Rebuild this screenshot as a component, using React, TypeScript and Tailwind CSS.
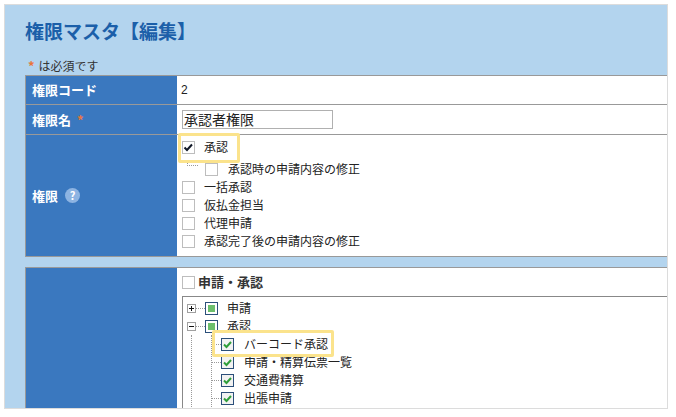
import React from "react";

type Item = { label: string; checked?: boolean };

const perms: Item[] = [
  { label: "一括承認" },
  { label: "仮払金担当" },
  { label: "代理申請" },
  { label: "承認完了後の申請内容の修正" },
];

const approvalChildren = ["バーコード承認", "申請・精算伝票一覧", "交通費精算", "出張申請"];

function PlainBox({ checked }: { checked?: boolean }) {
  return (
    <div className="relative w-[13px] h-[13px] shrink-0 border border-[#bdbdbd] bg-white">
      {checked && (
        <svg className="absolute left-0 top-0" width="11" height="11" viewBox="0 0 11 11">
          <path d="M1.5 5.5 L4 8 L9 2.5" fill="none" stroke="#111827" strokeWidth="2" />
        </svg>
      )}
    </div>
  );
}

function GreenCheck() {
  return (
    <div className="relative w-[13px] h-[13px] shrink-0 border border-[#2b4f7a] bg-[#f2f2f2]">
      <svg className="absolute left-0 top-0" width="11" height="11" viewBox="0 0 11 11">
        <path d="M2 5.5 L4.5 8 L9 3" fill="none" stroke="#2f9e3a" strokeWidth="2" />
      </svg>
    </div>
  );
}

function GreenPartial() {
  return (
    <div className="w-[13px] h-[13px] shrink-0 border border-[#2b4f7a] bg-white p-[2px]">
      <div className="w-full h-full bg-[#6cbf6c]" />
    </div>
  );
}

function Expander({ open }: { open?: boolean }) {
  return (
    <div className="w-[9px] h-[9px] shrink-0 border border-[#a0a0a0] bg-white">
      <svg width="7" height="7" viewBox="0 0 7 7" className="block">
        <path d="M1 3.5 H6" stroke="#111" strokeWidth="1" />
        {!open && <path d="M3.5 1 V6" stroke="#111" strokeWidth="1" />}
      </svg>
    </div>
  );
}

function Required() {
  return <span className="text-[#e8763a] font-bold text-[13px]">*</span>;
}

export default function App() {
  return (
    <div className="relative w-[676px] h-[417px] bg-white pt-[4px] pl-[4px] font-['Noto_Sans_CJK_JP',sans-serif] text-[#333]">
      <div className="w-[664px] h-[405px] border border-[#dcdcdc] bg-[#b3d4ee] overflow-hidden pl-[20px]">
        <h1 className="mt-[13px] h-[26px] leading-[26px] text-[19px] font-bold text-[#1b5fa9]">権限マスタ【編集】</h1>
        <p className="mt-[14px] h-[16px] leading-[16px] text-[12px] pl-[3px] flex items-center">
          <Required />
          <span className="ml-[4px]">は必須です</span>
        </p>

        {/* main table */}
        <div className="mt-[1px] w-[660px] border-t border-l border-[#999]">
          <div className="flex h-[29px] border-b border-[#999]">
            <div className="w-[151px] bg-[#3a78bf] text-white font-bold text-[13px] pl-[6px] flex items-center">権限コード</div>
            <div className="flex-1 bg-white pl-[4px] flex items-center text-[12px] font-['Liberation_Sans',sans-serif] text-[#222]">2</div>
          </div>
          <div className="flex h-[30px] border-b border-[#999]">
            <div className="w-[151px] bg-[#3a78bf] text-white font-bold text-[13px] pl-[6px] flex items-center gap-[6px]">
              権限名
              <Required />
            </div>
            <div className="flex-1 bg-white pl-[5px] flex items-center">
              <div className="w-[151px] h-[19px] border border-[#b0b0b0] pl-[1px] text-[14px] leading-[17px] text-[#222]">承認者権限</div>
            </div>
          </div>
          <div className="flex h-[122px] border-b border-[#999]">
            <div className="w-[151px] bg-[#3a78bf] text-white font-bold text-[13px] pl-[6px] flex items-center">
              権限
              <span className="ml-[7px] w-[15px] h-[15px] rounded-full bg-[#8db4e2] flex items-center justify-center text-[11px] leading-none font-bold">?</span>
            </div>
            <div className="flex-1 bg-white pl-[5px] pt-[3px] text-[12px] text-[#222]">
              <div className="flex items-center h-[18px]">
                <PlainBox checked />
                <span className="ml-[9px]">承認</span>
              </div>
              <div className="flex items-center h-[18px] mt-[4px]">
                <div className="self-start w-[11px] h-[6px] ml-[5px] border-l border-b border-dotted border-[#999]" />
                <div className="ml-[7px]">
                  <PlainBox />
                </div>
                <span className="ml-[10px]">承認時の申請内容の修正</span>
              </div>
              {perms.map((p) => (
                <div key={p.label} className="flex items-center h-[18px]">
                  <PlainBox />
                  <span className="ml-[9px]">{p.label}</span>
                </div>
              ))}
            </div>
          </div>
        </div>

        {/* menu table */}
        <div className="mt-[10px] w-[660px] border-t border-l border-[#999]">
          <div className="flex h-[200px]">
            <div className="w-[151px] bg-[#3a78bf]" />
            <div className="flex-1 bg-white pl-[5px] pt-[4px]">
              <div className="flex items-center h-[20px]">
                <PlainBox />
                <span className="ml-[3px] text-[13px] font-bold text-[#333]">申請・承認</span>
              </div>
              <div className="mt-[4px] border-t border-l border-[#888] pt-[2px] pl-[4px] text-[12px] text-[#222] h-[200px]">
                <div className="flex items-center h-[18px]">
                  <Expander />
                  <div className="w-[9px] border-t border-dotted border-[#999]" />
                  <GreenPartial />
                  <span className="ml-[9px]">申請</span>
                </div>
                <div className="flex items-center h-[18px]">
                  <Expander open />
                  <div className="w-[9px] border-t border-dotted border-[#999]" />
                  <GreenPartial />
                  <span className="ml-[9px]">承認</span>
                </div>
                <div className="ml-[4px] border-l border-dotted border-[#999]">
                  <div className="ml-[19px] border-l border-dotted border-[#999]">
                    {approvalChildren.map((c) => (
                      <div key={c} className="flex items-center h-[18px]">
                        <div className="w-[9px] border-t border-dotted border-[#999]" />
                        <GreenCheck />
                        <span className="ml-[10px]">{c}</span>
                      </div>
                    ))}
                  </div>
                </div>
              </div>
            </div>
          </div>
        </div>
      </div>

      {/* highlight callouts */}
      <div className="absolute left-[178px] top-[133px] w-[62px] h-[30px] border-[3px] border-[#fbe38c] rounded-[2px]" />
      <div className="absolute left-[212px] top-[330px] w-[122px] h-[27px] border-[3px] border-[#fbe38c] rounded-[2px]" />
    </div>
  );
}
